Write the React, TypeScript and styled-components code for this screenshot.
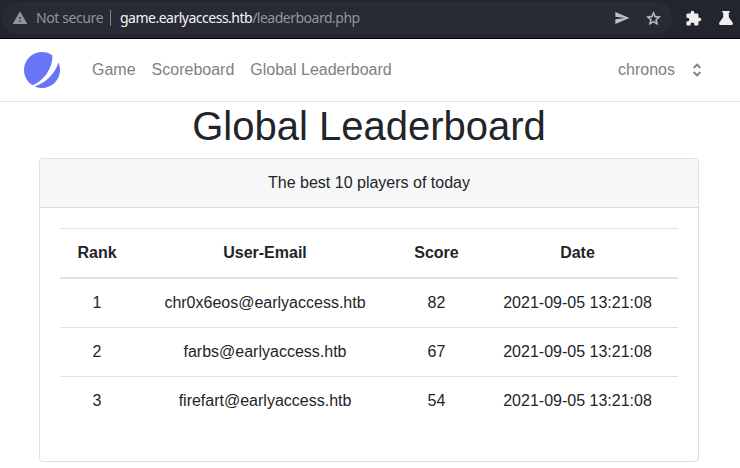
import React from 'react';
import styled, { createGlobalStyle } from 'styled-components';
import { MdWarning, MdSend, MdStarBorder, MdExtension } from 'react-icons/md';

const GlobalStyle = createGlobalStyle`
  * { box-sizing: border-box; }
  body {
    margin: 0;
    background: #fff;
    color: #212529;
    font: 400 16px/1.5 "Liberation Sans", Arial, sans-serif;
    overflow: hidden;
  }
  svg { display: block; flex: none; }
`;

const BrowserBar = styled.div`
  display: flex;
  height: 39px;
  padding: 2px 6px 0 2px;
  background: #22252e;
  border-bottom: 1px solid #000;
`;

const AddressField = styled.div`
  display: flex;
  align-items: center;
  width: 670px;
  height: 32px;
  padding: 0 10px 0 10px;
  border-radius: 16px;
  background: #282a35;
  color: #949599;
  font: 14px/20px "Noto Sans", sans-serif;
  letter-spacing: -0.5px;
  white-space: nowrap;
`;

const Security = styled.span`
  margin-left: 8px;
  width: 74px;
  letter-spacing: -0.4px;
`;

const Separator = styled.span`
  width: 1px;
  height: 16px;
  background: #85868c;
  margin-right: 9px;
`;

const Host = styled.span`
  color: #f4f4f5;
`;

const FieldActions = styled.div`
  display: flex;
  align-items: center;
  gap: 15px;
  margin-left: auto;
  color: #c3c3c4;
`;

const StarIcon = styled(MdStarBorder)`
  path:last-child {
    stroke: currentColor;
    stroke-width: 0.5px;
  }
  path[fill='none'] {
    stroke: none;
  }
`;

const Extensions = styled.div`
  display: flex;
  align-items: center;
  height: 32px;
  gap: 16px;
  margin-left: 13px;
  color: #f0efee;
`;

const Navbar = styled.nav`
  display: flex;
  align-items: center;
  height: 63px;
  padding: 0 34px 0 24px;
  border-bottom: 1px solid #dee2e6;
  color: #808080;
`;

const NavLinks = styled.div`
  display: flex;
  gap: 16px;
  margin-left: 32px;
`;

const NavLink = styled.a`
  color: inherit;
  text-decoration: none;
`;

const UserMenu = styled.div`
  display: flex;
  align-items: center;
  gap: 13px;
  margin-left: auto;
`;

const Title = styled.h1`
  margin: 0 2px 8px 0;
  font-size: 40px;
  font-weight: 400;
  line-height: 48px;
  text-align: center;
`;

const Card = styled.section`
  width: 660px;
  margin-left: 39px;
  border: 1px solid #dfdfdf;
  border-radius: 4px;
  overflow: hidden;
`;

const CardHeader = styled.header`
  padding: 12px 20px;
  background: #f7f7f7;
  border-bottom: 1px solid #dadada;
  text-align: center;
`;

const CardBody = styled.div`
  padding: 20px 20px 36px;
`;

const Table = styled.table`
  width: 618px;
  table-layout: fixed;
  border-spacing: 0;
  text-align: center;
`;

const Column = styled.col<{ $width: number }>`
  width: ${(p) => p.$width}px;
`;

const HeadCell = styled.th`
  padding: 12px 0;
  border-top: 1px solid #dee2e6;
  border-bottom: 2px solid #dee2e6;
`;

const Row = styled.tr`
  & + & > td { border-top: 1px solid #dee2e6; }
`;

const Cell = styled.td`
  padding: 12px 0;
`;

const columns = [
  { label: 'Rank', width: 74 },
  { label: 'User-Email', width: 262 },
  { label: 'Score', width: 81 },
  { label: 'Date', width: 201 },
];

const players = [
  { email: 'chr0x6eos@earlyaccess.htb', score: 82, date: '2021-09-05 13:21:08' },
  { email: 'farbs@earlyaccess.htb', score: 67, date: '2021-09-05 13:21:08' },
  { email: 'firefart@earlyaccess.htb', score: 54, date: '2021-09-05 13:21:08' },
];

const Flask = () => (
  <svg width="16" height="16" viewBox="0 0 16 16" fill="currentColor">
    <path d="M4.2 1h7.6v1.6h-1v4.6l3.8 5.4c.8 1.3.2 2.4-1.1 2.4H2.5c-1.3 0-1.9-1.1-1.1-2.4l3.8-5.4V2.6h-1z" />
  </svg>
);

const Logo = () => (
  <svg width="36" height="36" viewBox="0 0 48 48" fill="#6875f5">
    <path d="M11.395 44.428C4.557 40.198 0 32.632 0 24 0 10.745 10.745 0 24 0a23.891 23.891 0 0113.997 4.502c-.2 17.907-11.097 33.245-26.602 39.926z" />
    <path d="M14.134 45.885A23.914 23.914 0 0024 48c13.255 0 24-10.745 24-24 0-3.516-.756-6.856-2.115-9.866-4.659 15.143-16.608 27.092-31.75 31.751z" />
  </svg>
);

const Selector = () => (
  <svg width="18" height="18" viewBox="0 0 20 20" fill="currentColor" stroke="currentColor" strokeWidth="0.4">
    <path
      fillRule="evenodd"
      d="M10 3a1 1 0 01.707.293l3 3a1 1 0 01-1.414 1.414L10 5.414 7.707 7.707a1 1 0 01-1.414-1.414l3-3A1 1 0 0110 3zm-3.707 9.293a1 1 0 011.414 0L10 14.586l2.293-2.293a1 1 0 011.414 1.414l-3 3a1 1 0 01-1.414 0l-3-3a1 1 0 010-1.414z"
    />
  </svg>
);

export default function App() {
  return (
    <>
      <GlobalStyle />
      <BrowserBar>
        <AddressField>
          <MdWarning size={16} />
          <Security>Not secure</Security>
          <Separator />
          <Host>game.earlyaccess.htb</Host>
          <span>/leaderboard.php</span>
          <FieldActions>
            <MdSend size={16} />
            <StarIcon size={17} />
          </FieldActions>
        </AddressField>
        <Extensions>
          <MdExtension size={17} />
          <Flask />
        </Extensions>
      </BrowserBar>
      <Navbar>
        <Logo />
        <NavLinks>
          <NavLink>Game</NavLink>
          <NavLink>Scoreboard</NavLink>
          <NavLink>Global Leaderboard</NavLink>
        </NavLinks>
        <UserMenu>
          <span>chronos</span>
          <Selector />
        </UserMenu>
      </Navbar>
      <Title>Global Leaderboard</Title>
      <Card>
        <CardHeader>The best 10 players of today</CardHeader>
        <CardBody>
          <Table>
            <colgroup>
              {columns.map((c) => <Column key={c.label} $width={c.width} />)}
            </colgroup>
            <thead>
              <tr>{columns.map((c) => <HeadCell key={c.label}>{c.label}</HeadCell>)}</tr>
            </thead>
            <tbody>
              {players.map((p, i) => (
                <Row key={p.email}>
                  <Cell>{i + 1}</Cell>
                  <Cell>{p.email}</Cell>
                  <Cell>{p.score}</Cell>
                  <Cell>{p.date}</Cell>
                </Row>
              ))}
            </tbody>
          </Table>
        </CardBody>
      </Card>
    </>
  );
}
